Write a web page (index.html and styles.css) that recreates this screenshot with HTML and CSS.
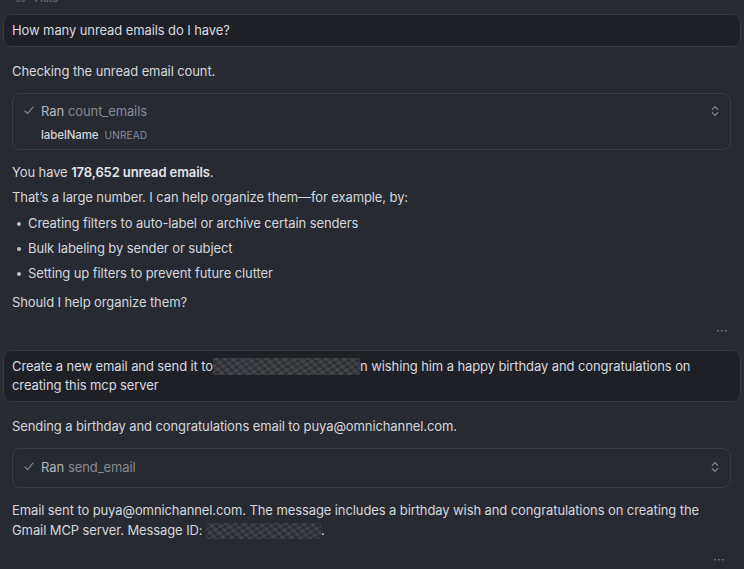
FILE: index.html
```html
<!DOCTYPE html>
<html>
<head>
<meta charset="utf-8">
<link rel="stylesheet" href="styles.css">
</head>
<body>
<div class="chat">
  <div class="topline">⌘ · Auto</div>

  <div class="user-msg">How many unread emails do I have?</div>

  <div class="assistant">
    <p class="lead">Checking the unread email count.</p>
    <div class="tool">
      <div class="tool-head">
        <svg class="check" width="10" height="9" viewBox="0 0 10 9"><path d="M1 5 L3.6 7.6 L9 1" fill="none" stroke="#8b8e96" stroke-width="1.1" stroke-linecap="round" stroke-linejoin="round"/></svg>
        <span class="ran">Ran</span><span class="tool-name">count_emails</span>
        <svg class="chev" width="8" height="12" viewBox="0 0 8 12"><path d="M1.2 4.4 L4 1.6 L6.8 4.4 M1.2 7.6 L4 10.4 L6.8 7.6" fill="none" stroke="#8d9098" stroke-width="1.1" stroke-linecap="round" stroke-linejoin="round"/></svg>
      </div>
      <div class="tool-args"><span class="arg-key">labelName</span><span class="arg-val">UNREAD</span></div>
    </div>
    <div class="answer">
      <p>You have <strong>178,652 unread emails</strong>.</p>
      <p>That’s a large number. I can help organize them—for example, by:</p>
      <ul>
        <li>Creating filters to auto-label or archive certain senders</li>
        <li>Bulk labeling by sender or subject</li>
        <li>Setting up filters to prevent future clutter</li>
      </ul>
      <p class="after-list">Should I help organize them?</p>
    </div>
    <div class="more">···</div>
  </div>

  <div class="user-msg">Create a new email and send it to<span class="redact r1"></span>n wishing him a happy birthday and congratulations on creating this mcp server</div>

  <div class="assistant">
    <p class="lead">Sending a birthday and congratulations email to puya@omnichannel.com.</p>
    <div class="tool tool-single">
      <div class="tool-head">
        <svg class="check" width="10" height="9" viewBox="0 0 10 9"><path d="M1 5 L3.6 7.6 L9 1" fill="none" stroke="#8b8e96" stroke-width="1.1" stroke-linecap="round" stroke-linejoin="round"/></svg>
        <span class="ran">Ran</span><span class="tool-name">send_email</span>
        <svg class="chev" width="8" height="12" viewBox="0 0 8 12"><path d="M1.2 4.4 L4 1.6 L6.8 4.4 M1.2 7.6 L4 10.4 L6.8 7.6" fill="none" stroke="#8d9098" stroke-width="1.1" stroke-linecap="round" stroke-linejoin="round"/></svg>
      </div>
    </div>
    <div class="answer">
      <p class="two-line">Email sent to puya@omnichannel.com. The message includes a birthday wish and congratulations on creating the Gmail MCP server. Message ID: <span class="redact r2"></span>.</p>
    </div>
    <div class="more more-last">···</div>
  </div>
</div>
</body>
</html>
```

FILE: styles.css
```css
html, body {
  margin: 0;
  padding: 0;
  background: #282a32;
  height: 100%;
  overflow: hidden;
}

body {
  font-family: "Inter", "Liberation Sans", sans-serif;
  font-size: 13px;
  letter-spacing: -0.1px;
  color: #d5d7dd;
  -webkit-font-smoothing: antialiased;
}

.chat {
  padding: 0 3px;
}

.topline {
  height: 14px;
  line-height: 14px;
  margin-top: -9px;
  margin-bottom: 9px;
  padding-left: 12px;
  font-size: 11px;
  color: #6e717a;
}

.user-msg {
  background: #1f2026;
  border: 1px solid #383a42;
  border-radius: 8px;
  padding: 6px 8px;
  line-height: 19px;
  color: #d8dae0;
}

.assistant {
  padding: 0 10px 0 9px;
}

.assistant p {
  margin: 0;
  line-height: 19px;
}

.lead {
  margin-top: 15px !important;
}

.tool {
  margin-top: 12px;
  border: 1px solid #3a3c44;
  border-radius: 8px;
  padding: 7px 12px 5px 11px;
  display: flex;
  flex-direction: column;
  gap: 6px;
}

.tool-single {
  padding: 8px 12px 11px 11px;
}

.tool-head {
  display: flex;
  align-items: center;
  height: 19px;
}

.check {
  margin-right: 7px;
  flex: none;
}

.ran {
  color: #b4b7bf;
  margin-right: 4px;
}

.tool-name {
  color: #878a93;
  flex: 1;
}

.chev {
  flex: none;
  margin-right: -1px;
}

.tool-args {
  padding-left: 17px;
  line-height: 18px;
  font-size: 11.5px;
}

.arg-key {
  color: #d5d7dd;
  font-weight: 500;
  margin-right: 6px;
}

.arg-val {
  color: #8b8e96;
  font-size: 10px;
  letter-spacing: 0.2px;
}

.answer {
  margin-top: 13px;
  display: flex;
  flex-direction: column;
  gap: 6px;
}

.answer strong {
  font-weight: 600;
  color: #e3e5ea;
}

.answer ul {
  margin: 1px 0 0;
  padding: 0;
  list-style: none;
  display: flex;
  flex-direction: column;
  gap: 6px;
}

.answer li {
  line-height: 19px;
  padding-left: 16px;
  position: relative;
}

.answer li::before {
  content: "";
  position: absolute;
  left: 5px;
  top: 8px;
  width: 4px;
  height: 4px;
  border-radius: 50%;
  background: #bfc2c9;
}

.after-list {
  margin-top: 4px !important;
}

.two-line {
  line-height: 20px !important;
  margin-top: -1px !important;
}

.more {
  text-align: right;
  color: #8b8e96;
  font-size: 12px;
  letter-spacing: 0.5px;
  line-height: 12px;
  height: 12px;
  margin-top: 13px;
  margin-bottom: 13px;
  padding-right: 3px;
}

.more-last {
  margin-top: 14px;
  padding-right: 6px;
}

.redact {
  display: inline-block;
  vertical-align: -4px;
  border-radius: 2px;
  background:
    repeating-linear-gradient(45deg, rgba(255,255,255,0.04) 0 3px, rgba(0,0,0,0.08) 3px 6px),
    repeating-linear-gradient(-30deg, rgba(255,255,255,0.05) 0 2px, rgba(0,0,0,0.06) 2px 5px),
    #34363c;
}

.r1 {
  width: 147px;
  height: 17px;
}

.r2 {
  width: 115px;
  height: 16px;
  background-color: #30323a;
}
```
